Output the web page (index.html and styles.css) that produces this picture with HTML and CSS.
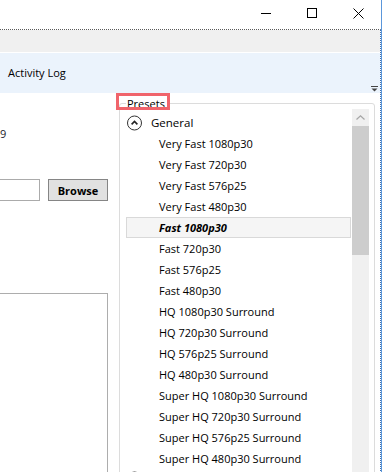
FILE: index.html
```html
<!DOCTYPE html>
<html lang="en">
<head>
    <meta charset="UTF-8">
    <meta name="viewport" content="width=device-width, initial-scale=1.0">
    <title>HandBrake</title>
    <link rel="stylesheet" href="styles.css">
</head>
<body>
    <div class="window">
        <!-- Caption buttons -->
        <div class="titlebar">
            <div class="caption-btn">
                <svg width="10" height="10" viewBox="0 0 10 10"><path d="M0 5.5H10" stroke="#000" stroke-width="1"/></svg>
            </div>
            <div class="caption-btn">
                <svg width="10" height="10" viewBox="0 0 10 10"><rect x="0.5" y="0.5" width="9" height="9" fill="none" stroke="#000" stroke-width="1"/></svg>
            </div>
            <div class="caption-btn">
                <svg width="11" height="11" viewBox="0 0 11 11"><path d="M0.5 0.5L10.5 10.5M10.5 0.5L0.5 10.5" stroke="#000" stroke-width="1"/></svg>
            </div>
        </div>

        <div class="client">
            <div class="tabstrip"></div>
            <div class="toolbar">
                <span class="toolbar-item">Activity Log</span>
                <svg class="ribbon-toggle" width="7" height="6" viewBox="0 0 7 6">
                    <path d="M0 0.5H7" stroke="#444" stroke-width="1"/>
                    <path d="M0.5 2.5H6.5L3.5 5.5Z" fill="#444"/>
                </svg>
            </div>

            <div class="content">
                <!-- Left side (mostly scrolled out of view) -->
                <div class="left-col">
                    <div class="dest-line">9</div>
                    <div class="browse-row">
                        <input type="text" class="path-input">
                        <button class="browse-btn">Browse</button>
                    </div>
                    <div class="summary-box"></div>
                </div>

                <!-- Presets group -->
                <div class="presets">
                    <span class="presets-legend">Presets</span>
                    <div class="presets-body">
                        <div class="preset-list">
                            <div class="preset-group">
                                <svg class="group-toggle" width="16" height="16" viewBox="0 0 16 16">
                                    <circle cx="7.5" cy="8" r="7" fill="none" stroke="#333" stroke-width="1"/>
                                    <path d="M4.6 9.4L7.5 6.5L10.4 9.4" fill="none" stroke="#222" stroke-width="1.6"/>
                                </svg>
                                <span>General</span>
                            </div>
                            <div class="preset">Very Fast 1080p30</div>
                            <div class="preset">Very Fast 720p30</div>
                            <div class="preset">Very Fast 576p25</div>
                            <div class="preset">Very Fast 480p30</div>
                            <div class="preset selected">Fast 1080p30</div>
                            <div class="preset">Fast 720p30</div>
                            <div class="preset">Fast 576p25</div>
                            <div class="preset">Fast 480p30</div>
                            <div class="preset">HQ 1080p30 Surround</div>
                            <div class="preset">HQ 720p30 Surround</div>
                            <div class="preset">HQ 576p25 Surround</div>
                            <div class="preset">HQ 480p30 Surround</div>
                            <div class="preset">Super HQ 1080p30 Surround</div>
                            <div class="preset">Super HQ 720p30 Surround</div>
                            <div class="preset">Super HQ 576p25 Surround</div>
                            <div class="preset">Super HQ 480p30 Surround</div>
                            <div class="preset-group next">
                                <svg class="group-toggle" width="16" height="16" viewBox="0 0 16 16">
                                    <circle cx="7.5" cy="8" r="7" fill="none" stroke="#333" stroke-width="1"/>
                                </svg>
                            </div>
                        </div>
                        <div class="scrollbar">
                            <div class="scroll-arrow">
                                <svg width="9" height="5" viewBox="0 0 9 5"><path d="M0.5 4.5L4.5 0.8L8.5 4.5" fill="none" stroke="#a6a6a6" stroke-width="1.2"/></svg>
                            </div>
                            <div class="scroll-thumb"></div>
                        </div>
                    </div>
                </div>
            </div>
        </div>
    </div>
</body>
</html>
```

FILE: styles.css
```css
html, body {
    margin: 0;
    padding: 0;
}
body {
    font-family: "Open Sans", "Noto Sans", sans-serif;
    font-size: 11px;
    color: #000;
    background-color: #fff;
    width: 382px;
    height: 472px;
    overflow: hidden;
}
.window {
    width: 381px;
    height: 472px;
    border-right: 1px solid #5b97db;
    overflow: hidden;
}
.titlebar {
    height: 29px;
    display: flex;
    justify-content: flex-end;
    background-color: #fff;
}
.caption-btn {
    width: 46px;
    height: 29px;
    display: flex;
    justify-content: center;
    align-items: flex-start;
    padding-top: 8px;
    box-sizing: border-box;
}
.client {
    border-top: 1px dotted #5a5a5a;
    border-right: 1px dotted #3d6fae;
    height: 443px;
    overflow: hidden;
}
.tabstrip {
    height: 22px;
    background-color: #f0f0f0;
    border-bottom: 1px solid #fff;
}
.toolbar {
    height: 40px;
    background-color: #ebf3fc;
    display: flex;
    align-items: center;
    padding-left: 8px;
}
.toolbar-item {
    margin-top: -1px;
}
.ribbon-toggle {
    margin-left: auto;
    align-self: flex-end;
    margin-bottom: 1px;
    margin-right: 2px;
}
.content {
    display: flex;
    align-items: flex-start;
}
.left-col {
    flex: 0 0 108px;
    display: flex;
    flex-direction: column;
}
.dest-line {
    margin-top: 33px;
    line-height: 16px;
    color: #1b1b2b;
}
.browse-row {
    margin-top: 37px;
    display: flex;
    gap: 8px;
    margin-left: -10px;
}
.path-input {
    width: 50px;
    height: 22px;
    box-sizing: border-box;
    border: 1px solid #ababab;
    margin: 0;
    padding: 0;
}
.browse-btn {
    width: 60px;
    height: 22px;
    box-sizing: border-box;
    margin: 0;
    padding: 0;
    border: 1px solid #858585;
    background-color: #e1e1e1;
    font-family: "Open Sans", "Noto Sans", sans-serif;
    font-size: 11px;
    font-weight: bold;
    color: #000;
}
.summary-box {
    margin-top: 92px;
    margin-left: -10px;
    width: 118px;
    height: 200px;
    box-sizing: border-box;
    border: 1px solid #adadad;
}
.presets {
    flex: 1;
    margin: 10px 5px 0 11px;
    height: 400px;
    border: 1px solid #dcdcdc;
    border-radius: 3px;
    position: relative;
}
.presets-legend {
    position: absolute;
    left: 6px;
    top: -7px;
    padding: 0 2px 0 1px;
    line-height: 13px;
    background-color: #fff;
}
/* highlight drawn round the group caption */
.presets-legend::after {
    content: '';
    position: absolute;
    left: -10px;
    top: -4px;
    width: 54px;
    height: 17px;
    box-sizing: border-box;
    border: 3px solid #f0646b;
}
.presets-body {
    display: flex;
    padding: 5px 5px 0 0;
}
.preset-list {
    width: 232px;
    padding-top: 2px;
}
.preset-group {
    height: 22px;
    margin: 0 1px 0 6px;
    padding-left: 1px;
    display: flex;
    align-items: center;
    gap: 8px;
    font-size: 11.5px;
}
.preset-group.next {
    align-items: flex-start;
}
.group-toggle {
    margin-top: 2px;
}
.preset {
    height: 19px;
    line-height: 19px;
    margin: 0 1px 0 6px;
    padding-left: 32px;
    border: 1px solid transparent;
    white-space: nowrap;
}
.preset.selected {
    font-weight: bold;
    font-style: italic;
    background-color: #f5f5f5;
    border-color: #d9d9d9;
}
.scrollbar {
    width: 17px;
    height: 400px;
    background-color: #f0f0f0;
}
.scroll-arrow {
    height: 17px;
    display: flex;
    justify-content: center;
    align-items: center;
}
.scroll-thumb {
    height: 129px;
    background-color: #cdcdcd;
}
```
